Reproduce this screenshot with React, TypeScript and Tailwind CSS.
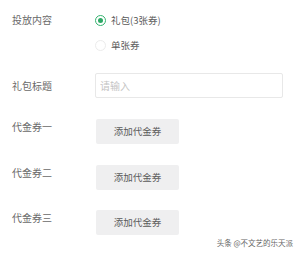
import React from "react";

const font = { fontFamily: '"Noto Sans CJK SC", "Noto Sans", sans-serif' };

function Radio({ checked, label }: { checked?: boolean; label: string }) {
  return (
    <div className="flex items-center h-[14px]">
      <span
        className={`flex items-center justify-center w-[11px] h-[11px] rounded-full border ${
          checked ? "border-[#34b36f]" : "border-[#ececec]"
        }`}
      >
        {checked && <span className="w-[5px] h-[5px] rounded-full bg-[#2ea866]" />}
      </span>
      <span className="ml-[5px] text-[9.5px] leading-[14px] text-[#5a5a5a]">{label}</span>
    </div>
  );
}

function VoucherRow({ label, top }: { label: string; top: string }) {
  return (
    <div className={`flex items-start ${top}`}>
      <div className="w-[96px] pl-[12px] pt-[1px] text-[10px] leading-[14px] text-[#6a6a6a]">{label}</div>
      <button className="w-[83px] h-[25px] rounded-[2px] bg-[#efeff0] text-[9.5px] text-[#5a5a5a]">
        添加代金券
      </button>
    </div>
  );
}

export default function App() {
  return (
    <div className="relative w-[300px] h-[254px] bg-white overflow-hidden" style={font}>
      <div className="pt-[13px]">
        {/* 投放内容 */}
        <div className="flex items-start">
          <div className="w-[95px] pl-[12px] text-[10px] leading-[14px] text-[#6a6a6a]">投放内容</div>
          <div className="flex flex-col gap-[11px]">
            <Radio checked label="礼包(3张券)" />
            <Radio label="单张券" />
          </div>
        </div>

        {/* 礼包标题 */}
        <div className="flex items-center mt-[21px]">
          <div className="w-[95px] pl-[12px] text-[10px] leading-[14px] text-[#6a6a6a]">礼包标题</div>
          <input
            placeholder="请输入"
            className="w-[188px] h-[25px] rounded-[2px] border border-[#e8e8e8] px-[4px] text-[10px] text-[#555] placeholder:text-[#c4c4c4] outline-none"
          />
        </div>

        <VoucherRow label="代金券一" top="mt-[21px]" />
        <VoucherRow label="代金券二" top="mt-[21px]" />
        <VoucherRow label="代金券三" top="mt-[20px]" />
      </div>

      <div className="absolute right-[7px] top-[237px] text-[7.5px] leading-[12px] text-[#666]">
        头条 @不文艺的乐天派
      </div>
    </div>
  );
}
